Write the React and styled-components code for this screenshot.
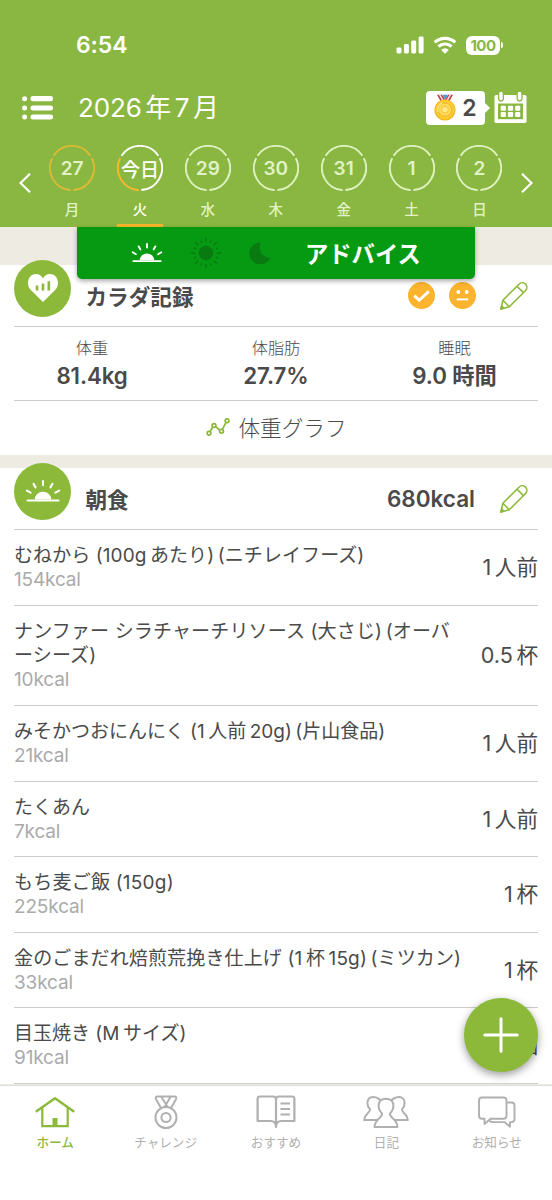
import React from "react";
import styled, { createGlobalStyle } from "styled-components";

const GlobalStyle = createGlobalStyle`
  body {
    margin: 0;
    background: #ffffff;
  }
  * {
    box-sizing: border-box;
  }
`

const Screen = styled.div`
  position: relative;
  display: flex;
  flex-direction: column;
  width: 552px;
  height: 1200px;
  overflow: hidden;
  background: #ffffff;
  color: #4a4a4a;
  font-family: Inter, "Noto Sans CJK JP", sans-serif;
  white-space: nowrap;
  svg {
    display: block;
    flex: none;
  }
`

const Header = styled.header`
  flex: none;
  display: flex;
  flex-direction: column;
  height: 227px;
  background: #8ab741;
  color: #ffffff;
`

const StatusBar = styled.div`
  display: flex;
  align-items: center;
  height: 90px;
  padding: 0 49px 0 76px;
`

const Clock = styled.div`
  flex: 1;
  font-size: 23px;
  font-weight: 600;
  letter-spacing: -0.1px;
`

const StatusIcons = styled.div`
  display: flex;
  align-items: center;
  gap: 9px;
`

const Battery = styled.div`
  display: flex;
  align-items: center;
  gap: 1px;
`

const BatteryBody = styled.div`
  display: flex;
  align-items: center;
  justify-content: center;
  width: 34px;
  height: 19px;
  border-radius: 6px;
  background: #ffffff;
  color: #8ab741;
  font-size: 15px;
  font-weight: 700;
  letter-spacing: -0.5px;
`

const BatteryTip = styled.div`
  width: 2px;
  height: 6px;
  border-radius: 0 2px 2px 0;
  background: #ffffff;
`

const TitleBar = styled.div`
  display: flex;
  align-items: center;
  height: 36px;
  padding: 0 25px 0 22px;
`

const Month = styled.div`
  flex: 1;
  margin-left: 24px;
  font-size: 26px;
  line-height: 36px;
  letter-spacing: -0.1px;
`

const MedalBadge = styled.div`
  display: flex;
  align-items: center;
  justify-content: center;
  gap: 6px;
  width: 59px;
  height: 34px;
  border-radius: 4px;
  background: #ffffff;
  color: #4a4a4a;
  font-size: 23px;
  font-weight: 600;
`

const BadgeArrow = styled.div`
  width: 0;
  height: 0;
  margin-right: 4px;
  border: 5px solid transparent;
  border-left-color: #ffffff;
  border-right: 0;
`

const Week = styled.div`
  display: flex;
  align-items: flex-start;
  padding: 19px 19px 0 18.5px;
`

const Arrow = styled.div`
  width: 12px;
  margin-top: 27.5px;
`

const Days = styled.div`
  flex: 1;
  display: grid;
  grid-template-columns: repeat(7, 67.9px);
  justify-content: center;
`

const Day = styled.div`
  display: flex;
  flex-direction: column;
  align-items: center;
  height: 82px;
  color: ${props => props.$today ? "#ffffff" : "#e1f3c6"};
`

const Ring = styled.div`
  display: grid;
  width: 46px;
  height: 46px;
  place-items: center;
  font-size: 19px;
  font-weight: ${props => props.$today ? 500 : 600};
  > * {
    grid-area: 1 / 1;
  }
`

const Weekday = styled.div`
  height: 33px;
  padding-top: 9px;
  font-size: 14.5px;
  font-weight: 500;
  line-height: 20px;
`

const Underline = styled.div`
  width: 46px;
  height: 3px;
  background: ${props => props.$today ? "#fbb829" : "transparent"};
`

const Advice = styled.div`
  position: absolute;
  z-index: 2;
  top: 227px;
  left: 77px;
  display: flex;
  align-items: center;
  width: 398px;
  height: 52px;
  padding-left: 54px;
  border-radius: 0 0 5px 5px;
  background: #059a11;
  box-shadow: 0 2px 5px rgba(0, 0, 0, 0.35);
  color: #ffffff;
`

const AdviceIcons = styled.div`
  display: flex;
  align-items: center;
  gap: 27px;
  width: 174px;
`

const AdviceLabel = styled.div`
  font-size: 23.3px;
  font-weight: 700;
`

const Content = styled.main`
  flex: 1;
  min-height: 0;
  overflow: hidden;
  background: #eeebe3;
`

const Card = styled.section`
  margin-top: ${props => props.$gap}px;
  padding: 0 14px;
  background: #ffffff;
`

const CardHeader = styled.div`
  display: flex;
  align-items: center;
  height: 62px;
  padding-right: 10px;
  border-bottom: 1px solid #cccccc;
`

const CardIcon = styled.div`
  display: flex;
  align-items: center;
  justify-content: center;
  width: 57px;
  height: 57px;
  margin-top: -15px;
  border-radius: 50%;
  background: #8cb93a;
`

const CardTitle = styled.h2`
  flex: 1;
  margin: 0 0 0 14.5px;
  padding-bottom: 1px;
  font-size: 21.6px;
  font-weight: 600;
`

const Moods = styled.div`
  display: flex;
  gap: 14px;
  margin-right: 24px;
`

const Total = styled.div`
  margin-right: 25px;
  font-size: 22.5px;
  font-weight: 600;
`

const Stats = styled.div`
  display: grid;
  grid-template-columns: 156px 212px 145px;
  height: 74px;
  padding-top: 9px;
  border-bottom: 1px solid #cccccc;
  text-align: center;
`

const StatLabel = styled.div`
  font-size: 16.2px;
  font-weight: 300;
  line-height: 24px;
`

const StatValue = styled.div`
  font-size: 22.3px;
  font-weight: 600;
  line-height: 32px;
  letter-spacing: -0.1px;
`

const GraphLink = styled.div`
  display: flex;
  align-items: center;
  justify-content: center;
  gap: 9px;
  height: 54px;
  padding-bottom: 3px;
  font-size: 21.6px;
  font-weight: 300;
`

const Meal = styled.div`
  display: flex;
  align-items: center;
  height: ${props => props.$lines === 2 ? 100.5 : 75.5}px;
  border-bottom: 1px solid #cccccc;
`

const MealText = styled.div`
  flex: 1;
  padding-top: 2px;
  font-size: 19px;
  line-height: 24.2px;
`

const MealName = styled.div`
  letter-spacing: ${props => props.$tracking}px;
`

const Kcal = styled.div`
  color: #aaaaaa;
  letter-spacing: -0.15px;
`

const Amount = styled.div`
  padding-bottom: 3px;
  font-size: 21.6px;
`

const Latin = styled.span`
  margin: 0 ${props => props.$after ? 3.5 : 0}px 0 ${props => props.$before ? 3.5 : 0}px;
`

const AddButton = styled.div`
  position: absolute;
  z-index: 2;
  top: 998px;
  left: 464px;
  display: flex;
  align-items: center;
  justify-content: center;
  width: 74px;
  height: 74px;
  border-radius: 50%;
  background: #8cb93a;
  box-shadow: 0 3px 8px rgba(0, 0, 0, 0.4);
`

const TabBar = styled.nav`
  flex: none;
  display: grid;
  grid-template-columns: repeat(5, 1fr);
  height: 115px;
  padding-top: 9px;
  border-top: 1px solid #dddddd;
  background: #ffffff;
`

const Tab = styled.div`
  display: flex;
  flex-direction: column;
  align-items: center;
  gap: 4px;
  color: ${props => props.$active ? "#8cb93a" : "#b0b0b0"};
  font-size: 12.6px;
  font-weight: ${props => props.$active ? 500 : 400};
  line-height: 20px;
`

// adds a thin gap where half-width text touches Japanese text,
// and between two back-to-back brackets
const Mixed = ({ text }) => {
    const parts = text.split(/([0-9A-Za-z.]+|\)(?=\())/)
    const wide = c => !!c && c.charCodeAt(0) > 255
    return parts.map((part, i) => {
        if (i % 2 === 0) return part
        return (
            <Latin
                key={i}
                $before={part !== ")" && wide(parts[i - 1].slice(-1))}
                $after={part === ")" || wide(parts[i + 1][0])}
            >
                {part}
            </Latin>
        )
    })
}

const RingArcs = ({ colors }) => (
    <svg width="46" height="46" viewBox="-23 -23 46 46" fill="none" strokeWidth="1.9">
        {colors.map((color, i) => (
            <path key={i} d="M-1.3 22.1A22.1 22.1 0 0 1 -19.8 -9.8" stroke={color} transform={`rotate(${i * 120})`}/>
        ))}
    </svg>
)

const Sunrise = ({ width }) => (
    <svg width={width} height={width * 0.66} viewBox="0 0 35 23" fill="none" stroke="#fff" strokeWidth="2" strokeLinecap="round">
        <path d="M2.5 20.8H32.5"/>
        <path d="M9.500 20a8 7.600 0 0 1 16 0z" fill="#fff" stroke="none"/>
        <path d="M17.500 2v4M8.300 4.700l2 3.400M26.700 4.700l-2 3.400M1.800 11.200l3.600 2.100M33.200 11.200l-3.600 2.100"/>
    </svg>
)

const SunIcon = () => (
    <svg width="32" height="32" viewBox="-16 -16 32 32" stroke="#087a10" strokeWidth="1.4">
        <circle r="7.2" fill="#087a10" stroke="none"/>
        {[...Array(16)].map((_, i) => (
            <path key={i} d={i % 2 ? "M0 -10.8V-13.2" : "M0 -10.8V-15.2"} transform={`rotate(${i * 22.5})`}/>
        ))}
    </svg>
)

const MoonIcon = () => (
    <svg width="22" height="22" viewBox="0 0 22 22">
        <path d="M12 .5A11 11 0 1 0 21.500 15.500A10 10 0 0 1 12 .5z" fill="#087a10"/>
    </svg>
)

const ListIcon = () => (
    <svg width="32" height="24" viewBox="0 0 32 24" fill="#fff">
        {[2.7, 12, 21].map(y => (
            <React.Fragment key={y}>
                <circle cx="2.6" cy={y} r="2.5"/>
                <rect x="8.5" y={y - 2.6} width="22.5" height="5.2" rx="2.4"/>
            </React.Fragment>
        ))}
    </svg>
)

const Medal = () => (
    <svg width="22" height="28" viewBox="0 0 22 28">
        <path d="M3 .8h5l5.500 9H8z" fill="#c83a45"/>
        <path d="M19 .8h-5l-5.500 9H14z" fill="#c83a45"/>
        <path d="M4.800.8h1.600l4.800 8H9.400zM17.200.8h-1.600l-4.800 8h1.800z" fill="#f3e6e8"/>
        <path d="M8.200.8h5.600L11 6z" fill="#4c9ad0"/>
        <circle cx="11" cy="16" r="10.6" fill="#efb01c"/>
        <circle cx="11" cy="15.6" r="9.8" fill="#fdcb30"/>
        <circle cx="11" cy="15.6" r="6.6" fill="#ffdc5d" stroke="#f7b724" strokeWidth="1"/>
        <circle cx="11" cy="15.6" r="3.4" fill="#ffe987" stroke="#f8bf36" strokeWidth="1"/>
        <path d="M4 18a7.500 7.500 0 0 1 4-9" fill="none" stroke="#fff0a8" strokeWidth="1"/>
    </svg>
)

const CalendarIcon = () => (
    <svg width="33" height="34" viewBox="0 0 33 34">
        <rect x=".5" y="4" width="32" height="28" rx="1.600" fill="#fff"/>
        <rect x="4" y="12.500" width="25" height="15.700" fill="#8ab741"/>
        {[7, 25.6].map(x => (
            <rect key={x} x={x - 2.4} y=".2" width="4.800" height="9.800" rx="2.400" fill="#fff" stroke="#8ab741" strokeWidth="1.300"/>
        ))}
        {[6.7, 13.9, 21.1].map(x => [14.7, 20.9].map(y => (
            <rect key={`${x}-${y}`} x={x} y={y} width="5.200" height="5" rx="1" fill="#fff"/>
        )))}
    </svg>
)

const HeartIcon = () => (
    <svg width="32" height="30" viewBox="0 0 32 30">
        <path d="M16 29L3.600 16.800C-1.600 11 1.400.9 9 .9c3.200 0 5.800 1.900 7 4.500C17.200 2.800 19.800.9 23 .9c7.600 0 10.600 10.100 5.400 15.900z" fill="#fff"/>
        <path d="M10 12.500v5M16 10.500v7M21.800 8.200v9.300" stroke="#8cb93a" strokeWidth="2.600"/>
    </svg>
)

const PencilIcon = () => (
    <svg width="28" height="28" viewBox="0 0 28 28" fill="none" stroke="#8cb93a" strokeWidth="1.600" strokeLinejoin="round">
        <path d="M.9 27l2-8.700L19 2.200a4.500 4.500 0 0 1 6.600 6.300L9.300 24.700z"/>
        <path d="M2.900 18.300l6.400 6.400M17 4.200l6.500 6.400M.9 27l2.800-.7-1.900-2.300z"/>
    </svg>
)

const CheckFace = () => (
    <svg width="27" height="27" viewBox="0 0 27 27">
        <circle cx="13.500" cy="13.500" r="13.500" fill="#fcb32e"/>
        <path d="M6.300 13.600l4.900 4.600L20.800 9.400" fill="none" stroke="#fff" strokeWidth="2.900"/>
    </svg>
)

const NeutralFace = () => (
    <svg width="27" height="27" viewBox="0 0 27 27">
        <circle cx="13.500" cy="13.500" r="13.500" fill="#fcb32e"/>
        <circle cx="9.300" cy="10" r="1.900" fill="#fff"/>
        <circle cx="17.700" cy="10" r="1.900" fill="#fff"/>
        <path d="M7.800 17.400h11.400" stroke="#fff" strokeWidth="2"/>
    </svg>
)

const GraphIcon = () => (
    <svg width="24" height="18" viewBox="0 0 24 18" fill="none" stroke="#8cb93a" strokeWidth="1.700">
        <path d="M4 13.700L6.600 9.300M9.700 8.700L13.700 12M16.500 11.200L20 4.300"/>
        <circle cx="3" cy="15.300" r="1.900"/>
        <circle cx="8" cy="7.500" r="1.900"/>
        <circle cx="15.500" cy="13.300" r="1.900"/>
        <circle cx="21" cy="2.700" r="1.900"/>
    </svg>
)

const tabIcons = {
    home: (
        <svg width="40" height="34" viewBox="0 0 40 34" fill="none" stroke="currentColor" strokeWidth="2.200">
            <path d="M.8 16.800L20 3.300l19.200 13.500" strokeWidth="2.400"/>
            <path d="M7.300 12.500v18.700h25.400V12.500"/>
            <path d="M17.500 23h5v8h-5z" fill="currentColor" stroke="none"/>
        </svg>
    ),
    challenge: (
        <svg width="24" height="34" viewBox="0 0 24 34" fill="none" stroke="currentColor" strokeWidth="2" strokeLinejoin="round">
            <circle cx="12" cy="22.500" r="10.500"/>
            <circle cx="12" cy="22.500" r="4.600"/>
            <path d="M7 13L2 4.200Q1 1.500 3.500 1.500h17Q23 1.500 22 4.200L17 13M7.500 2l6.200 10M16.500 2l-6 10"/>
        </svg>
    ),
    recommend: (
        <svg width="40" height="34" viewBox="0 0 40 34" fill="none" stroke="currentColor" strokeWidth="2.200" strokeLinejoin="round">
            <path d="M20 32V4.500Q20 1.500 17 1.500H4Q1.600 1.500 1.600 4v22h12.900Q20 26 20 32Q20 26 25.500 26h12.900V4Q38.400 1.500 36 1.500H23Q20 1.500 20 4.500"/>
            <path d="M24.500 8.500h9.500M24.500 14h9.500M24.500 19.500h9.500"/>
        </svg>
    ),
    diary: (
        <svg width="46" height="34" viewBox="0 0 46 34" fill="#fff" stroke="currentColor" strokeWidth="2" strokeLinejoin="round">
            <path d="M10 2c-3.600 0-5.600 2.600-5.600 6 0 2.600.8 4.600 2.600 6.300.6 3.400-5 3.700-5.800 10.700H20V8C17 4 14.500 2 10 2z"/>
            <path d="M36 2c3.600 0 5.600 2.600 5.600 6 0 2.600-.8 4.600-2.600 6.300-.6 3.400 5 3.700 5.800 10.700H26V8C29 4 31.500 2 36 2z"/>
            <path d="M23 3.800c-4.800 0-7.400 3-7.400 7 0 3.500 1.200 5.700 3.400 7.600.9 4.600-6.800 4.600-7.500 13.600h23c-.7-9-8.400-9-7.500-13.600 2.200-1.900 3.400-4.100 3.400-7.600 0-4-2.600-7-7.400-7z"/>
        </svg>
    ),
    notice: (
        <svg width="38" height="34" viewBox="0 0 38 34" fill="none" stroke="currentColor" strokeWidth="1.900" strokeLinejoin="round">
            <path d="M4 2.500h21.500q3 0 3 3v15.300q0 3-3 3h-13L6.500 29v-5.200H4q-3 0-3-3V5.500q0-3 3-3z"/>
            <path d="M28.500 7.500h5q3 0 3 3v13.600q0 3-3 3H32v4.600l-5.500-4.600H15q-3 0-4-2"/>
        </svg>
    ),
}

const dim = "#dff1bf"
const amber = "#dcba35"

const days = [
    { date: "27", weekday: "月", colors: [amber, amber, amber] },
    { date: "今日", weekday: "火", colors: ["#fbb829", "#ffffff", "#ffffff"], today: true },
    { date: "29", weekday: "水" },
    { date: "30", weekday: "木" },
    { date: "31", weekday: "金" },
    { date: "1", weekday: "土" },
    { date: "2", weekday: "日" },
]

const stats = [
    { label: "体重", value: "81.4kg" },
    { label: "体脂肪", value: "27.7%" },
    { label: "睡眠", value: "9.0 時間" },
]

const meals = [
    { name: ["むねから (100gあたり)(ニチレイフーズ)"], kcal: 154, amount: "1人前", tracking: 0.08 },
    { name: ["ナンファー シラチャーチリソース (大さじ)(オーバ", "ーシーズ)"], kcal: 10, amount: "0.5杯", tracking: 0.15 },
    { name: ["みそかつおにんにく (1人前20g)(片山食品)"], kcal: 21, amount: "1人前", tracking: 0 },
    { name: ["たくあん"], kcal: 7, amount: "1人前", tracking: 0 },
    { name: ["もち麦ご飯 (150g)"], kcal: 225, amount: "1杯", tracking: 0.22 },
    { name: ["金のごまだれ焙煎荒挽き仕上げ (1杯15g)(ミツカン)"], kcal: 33, amount: "1杯", tracking: 0.14 },
    { name: ["目玉焼き (Mサイズ)"], kcal: 91, amount: "1個", tracking: 0 },
]

const tabs = [
    { id: "home", label: "ホーム" },
    { id: "challenge", label: "チャレンジ" },
    { id: "recommend", label: "おすすめ" },
    { id: "diary", label: "日記" },
    { id: "notice", label: "お知らせ" },
]

const App = () => {
    return (
        <Screen>
            <GlobalStyle/>
            <Header>
                <StatusBar>
                    <Clock>6:54</Clock>
                    <StatusIcons>
                        <svg width="28" height="18" viewBox="0 0 28 18" fill="#fff">
                            <rect x="0.500" y="11.500" width="5" height="6" rx="1.400"/>
                            <rect x="7.900" y="8" width="5" height="9.500" rx="1.400"/>
                            <rect x="15.200" y="4.500" width="5" height="13" rx="1.400"/>
                            <rect x="22.600" y="0.500" width="5" height="17" rx="1.400"/>
                        </svg>
                        <svg width="24" height="18" viewBox="0 0 24 18" fill="none" stroke="#fff" strokeWidth="3.200">
                            <path d="M1.700 6.400a15 15 0 0 1 20.600 0M5.500 10.700a9.200 9.200 0 0 1 13 0"/>
                            <path d="M12 17.800l-3.800-3.900a5.400 5.400 0 0 1 7.600 0z" fill="#fff" stroke="none"/>
                        </svg>
                        <Battery>
                            <BatteryBody>100</BatteryBody>
                            <BatteryTip/>
                        </Battery>
                    </StatusIcons>
                </StatusBar>
                <TitleBar>
                    <ListIcon/>
                    <Month><Mixed text="2026年7月"/></Month>
                    <MedalBadge>
                        <Medal/>
                        2
                    </MedalBadge>
                    <BadgeArrow/>
                    <CalendarIcon/>
                </TitleBar>
                <Week>
                    <Arrow>
                        <svg width="12" height="20" viewBox="0 0 12 20" fill="none" stroke="#fff" strokeWidth="2.200">
                            <path d="M11 .8L1.500 10 11 19.200"/>
                        </svg>
                    </Arrow>
                    <Days>
                        {days.map(day => (
                            <Day key={day.weekday} $today={day.today}>
                                <Ring $today={day.today}>
                                    <RingArcs colors={day.colors || [dim, dim, dim]}/>
                                    <span>{day.date}</span>
                                </Ring>
                                <Weekday>{day.weekday}</Weekday>
                                <Underline $today={day.today}/>
                            </Day>
                        ))}
                    </Days>
                    <Arrow>
                        <svg width="12" height="20" viewBox="0 0 12 20" fill="none" stroke="#fff" strokeWidth="2.200">
                            <path d="M1 .8l9.500 9.200L1 19.200"/>
                        </svg>
                    </Arrow>
                </Week>
            </Header>

            <Advice>
                <AdviceIcons>
                    <Sunrise width={32}/>
                    <SunIcon/>
                    <MoonIcon/>
                </AdviceIcons>
                <AdviceLabel>アドバイス</AdviceLabel>
            </Advice>

            <Content>
                <Card $gap={38}>
                    <CardHeader>
                        <CardIcon><HeartIcon/></CardIcon>
                        <CardTitle>カラダ記録</CardTitle>
                        <Moods>
                            <CheckFace/>
                            <NeutralFace/>
                        </Moods>
                        <PencilIcon/>
                    </CardHeader>
                    <Stats>
                        {stats.map(stat => (
                            <div key={stat.label}>
                                <StatLabel>{stat.label}</StatLabel>
                                <StatValue>{stat.value}</StatValue>
                            </div>
                        ))}
                    </Stats>
                    <GraphLink>
                        <GraphIcon/>
                        体重グラフ
                    </GraphLink>
                </Card>

                <Card $gap={13}>
                    <CardHeader>
                        <CardIcon><Sunrise width={36}/></CardIcon>
                        <CardTitle>朝食</CardTitle>
                        <Total>680kcal</Total>
                        <PencilIcon/>
                    </CardHeader>
                    {meals.map(meal => (
                        <Meal key={meal.name[0]} $lines={meal.name.length}>
                            <MealText>
                                {meal.name.map(line => (
                                    <MealName key={line} $tracking={meal.tracking}><Mixed text={line}/></MealName>
                                ))}
                                <Kcal>{meal.kcal}kcal</Kcal>
                            </MealText>
                            <Amount><Mixed text={meal.amount}/></Amount>
                        </Meal>
                    ))}
                </Card>
            </Content>

            <AddButton>
                <svg width="36" height="36" viewBox="0 0 36 36" stroke="#fff" strokeWidth="3" strokeLinecap="round">
                    <path d="M18 1.800v32.400M1.800 18h32.400"/>
                </svg>
            </AddButton>

            <TabBar>
                {tabs.map(tab => (
                    <Tab key={tab.id} $active={tab.id === "home"}>
                        {tabIcons[tab.id]}
                        {tab.label}
                    </Tab>
                ))}
            </TabBar>
        </Screen>
    )
}

export default App;
